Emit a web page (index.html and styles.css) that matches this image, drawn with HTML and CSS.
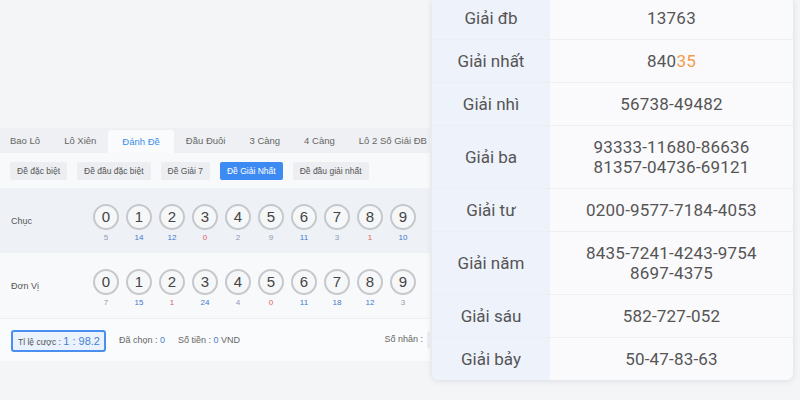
FILE: index.html
```html
<!DOCTYPE html>
<html lang="vi">
<head>
    <meta charset="UTF-8">
    <meta name="viewport" content="width=device-width, initial-scale=1.0">
    <title>Đánh Đề - Kết quả</title>
    <link rel="stylesheet" href="styles.css">
</head>
<body>
    <div class="page">
        <div class="game">
            <div class="game-top"></div>
            <div class="tabs">
                <div class="tab">Bao Lô</div>
                <div class="tab">Lô Xiên</div>
                <div class="tab active">Đánh Đề</div>
                <div class="tab">Đầu Đuôi</div>
                <div class="tab">3 Càng</div>
                <div class="tab">4 Càng</div>
                <div class="tab">Lô 2 Số Giải ĐB</div>
            </div>

            <div class="panel">
                <div class="subtabs">
                    <div class="subtab">Đề đặc biệt</div>
                    <div class="subtab">Đề đầu đặc biệt</div>
                    <div class="subtab">Đề Giải 7</div>
                    <div class="subtab active">Đề Giải Nhất</div>
                    <div class="subtab">Đề đầu giải nhất</div>
                </div>

                <div class="pick-row shaded">
                    <div class="pick-label">Chục</div>
                    <div class="balls">
                        <div class="ball-item"><div class="ball">0</div><span class="count gray">5</span></div>
                        <div class="ball-item"><div class="ball">1</div><span class="count blue">14</span></div>
                        <div class="ball-item"><div class="ball">2</div><span class="count blue">12</span></div>
                        <div class="ball-item"><div class="ball">3</div><span class="count red">0</span></div>
                        <div class="ball-item"><div class="ball">4</div><span class="count gray">2</span></div>
                        <div class="ball-item"><div class="ball">5</div><span class="count gray">9</span></div>
                        <div class="ball-item"><div class="ball">6</div><span class="count blue">11</span></div>
                        <div class="ball-item"><div class="ball">7</div><span class="count gray">3</span></div>
                        <div class="ball-item"><div class="ball">8</div><span class="count red">1</span></div>
                        <div class="ball-item"><div class="ball">9</div><span class="count blue">10</span></div>
                    </div>
                </div>

                <div class="pick-row">
                    <div class="pick-label">Đơn Vị</div>
                    <div class="balls">
                        <div class="ball-item"><div class="ball">0</div><span class="count gray">7</span></div>
                        <div class="ball-item"><div class="ball">1</div><span class="count blue">15</span></div>
                        <div class="ball-item"><div class="ball">2</div><span class="count red">1</span></div>
                        <div class="ball-item"><div class="ball">3</div><span class="count blue">24</span></div>
                        <div class="ball-item"><div class="ball">4</div><span class="count gray">4</span></div>
                        <div class="ball-item"><div class="ball">5</div><span class="count red">0</span></div>
                        <div class="ball-item"><div class="ball">6</div><span class="count blue">11</span></div>
                        <div class="ball-item"><div class="ball">7</div><span class="count blue">18</span></div>
                        <div class="ball-item"><div class="ball">8</div><span class="count blue">12</span></div>
                        <div class="ball-item"><div class="ball">9</div><span class="count gray">3</span></div>
                    </div>
                </div>

                <div class="summary">
                    <div class="ratio">Tỉ lệ cược : <span class="ratio-value">1 : 98.2</span></div>
                    <div class="summary-item">Đã chọn : <span class="hl">0</span></div>
                    <div class="summary-item">Số tiền : <span class="hl">0</span> VND</div>
                    <div class="multiplier">Số nhân :<span class="multiplier-input"></span></div>
                </div>
            </div>
        </div>

        <div class="results">
            <div class="result-row">
                <div class="prize">Giải đb</div>
                <div class="numbers">13763</div>
            </div>
            <div class="result-row">
                <div class="prize">Giải nhất</div>
                <div class="numbers">840<span class="highlight">35</span></div>
            </div>
            <div class="result-row">
                <div class="prize">Giải nhì</div>
                <div class="numbers">56738-49482</div>
            </div>
            <div class="result-row">
                <div class="prize">Giải ba</div>
                <div class="numbers">93333-11680-86636<br>81357-04736-69121</div>
            </div>
            <div class="result-row">
                <div class="prize">Giải tư</div>
                <div class="numbers">0200-9577-7184-4053</div>
            </div>
            <div class="result-row">
                <div class="prize">Giải năm</div>
                <div class="numbers">8435-7241-4243-9754<br>8697-4375</div>
            </div>
            <div class="result-row">
                <div class="prize">Giải sáu</div>
                <div class="numbers">582-727-052</div>
            </div>
            <div class="result-row">
                <div class="prize">Giải bảy</div>
                <div class="numbers">50-47-83-63</div>
            </div>
        </div>
    </div>
</body>
</html>
```

FILE: styles.css
```css
body {
    margin: 0;
    padding: 0;
    background-color: #f4f5f7;
    font-family: "Liberation Sans", Arial, sans-serif;
    overflow: hidden;
}
.page {
    display: flex;
    align-items: flex-start;
    width: 800px;
    height: 400px;
}
.game {
    width: 430px;
    flex-shrink: 0;
    overflow: hidden;
}
.game-top {
    height: 128px;
}
.tabs {
    display: flex;
    height: 25px;
    background-color: #eef0f3;
    white-space: nowrap;
}
.tab {
    padding: 0 12px;
    font-size: 9.5px;
    line-height: 25px;
    color: #666;
    flex-shrink: 0;
}
.tab:first-child {
    padding-left: 10px;
}
.tab:nth-child(3) {
    padding: 0 14px;
}
.tab.active {
    background-color: #fafbfc;
    color: #3a8ee6;
    margin-top: 2px;
    line-height: 23px;
    border-radius: 3px 3px 0 0;
}
.panel {
    background-color: #f8f9fb;
}
.subtabs {
    display: flex;
    gap: 10px;
    padding: 9px 10px 8px;
    white-space: nowrap;
}
.subtab {
    height: 18px;
    line-height: 18px;
    padding: 0 7px;
    font-size: 8.5px;
    color: #555;
    background-color: #eceef2;
    border-radius: 2px;
}
.subtab.active {
    background-color: #3d8bf2;
    color: white;
}
.pick-row {
    display: flex;
    align-items: flex-start;
    height: 65px;
    padding-top: 16px;
    box-sizing: border-box;
}
.pick-row.shaded {
    background-color: #eef1f6;
}
.pick-label {
    width: 93px;
    padding-left: 11px;
    box-sizing: border-box;
    font-size: 9px;
    color: #555;
    line-height: 34px;
}
.balls {
    display: flex;
    gap: 7px;
}
.ball-item {
    display: flex;
    flex-direction: column;
    align-items: center;
    width: 26px;
}
.ball {
    width: 26px;
    height: 26px;
    box-sizing: border-box;
    border: 2px solid #c6c8cc;
    border-radius: 50%;
    background-color: #f6f7f9;
    font-size: 15px;
    line-height: 22px;
    text-align: center;
    color: #444;
}
.count {
    font-size: 8px;
    margin-top: 3px;
}
.count.blue {
    color: #3f78d0;
}
.count.gray {
    color: #8d9ab3;
}
.count.red {
    color: #e26060;
}
.summary {
    display: flex;
    align-items: center;
    height: 42px;
    padding: 0 11px;
    border-top: 1px solid #eceef1;
    background-color: #fafbfc;
    font-size: 9px;
    color: #666;
    white-space: nowrap;
}
.ratio {
    height: 22px;
    line-height: 18px;
    padding: 0 4px 0 5px;
    box-sizing: border-box;
    border: 2px solid #4a8ff0;
    border-radius: 3px;
    background-color: #e9f2fd;
    color: #555;
    font-size: 8.5px;
    margin-right: 13px;
    margin-top: 2px;
}
.ratio-value {
    font-size: 11px;
    color: #4a7fd0;
}
.summary-item {
    margin-right: 13px;
}
.hl {
    color: #4a7fd0;
}
.multiplier {
    margin-left: auto;
    margin-right: -38px;
}
.multiplier-input {
    display: inline-block;
    vertical-align: middle;
    width: 30px;
    height: 18px;
    margin-left: 4px;
    background-color: #eceef2;
    border-radius: 3px;
}
.results {
    width: 361px;
    margin-left: 2px;
    margin-top: -3px;
    background-color: #fafafc;
    border-radius: 6px;
    box-shadow: 0 1px 6px rgba(40, 50, 80, 0.12);
    overflow: hidden;
    font-family: Roboto, "Liberation Sans", sans-serif;
    font-size: 17px;
    color: #555;
}
.result-row {
    display: flex;
    border-bottom: 1px solid #eceef2;
}
.result-row:last-child {
    border-bottom: none;
}
.prize {
    width: 118px;
    flex-shrink: 0;
    background-color: #eef2fb;
    display: flex;
    align-items: center;
    justify-content: center;
    line-height: 20px;
    padding: 11px 0;
}
.numbers {
    flex: 1;
    text-align: center;
    line-height: 20px;
    padding: 11px 0;
    letter-spacing: 0.2px;
}
.highlight {
    color: #f39b4a;
}
```
